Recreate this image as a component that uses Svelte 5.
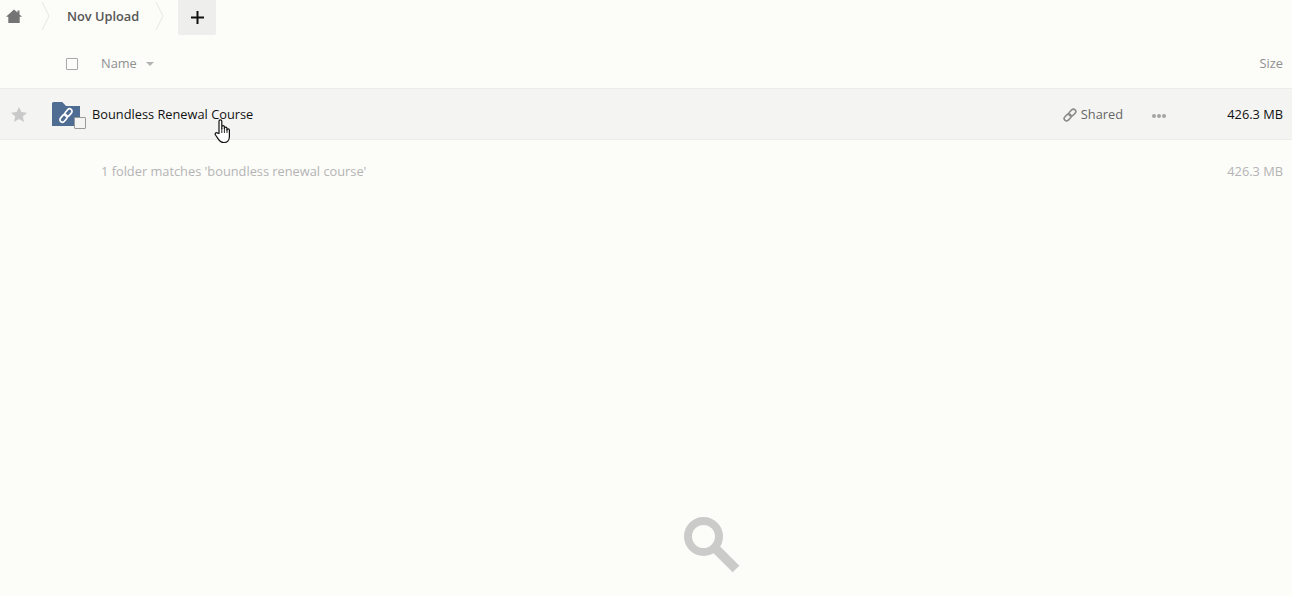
<script>
  const crumbs = ['Nov Upload'];
</script>

<div class="page">
  <nav class="crumbs">
    <div class="crumb home">
      <svg width="16" height="15" viewBox="0 0 16 15"><path fill="#747474" d="M8 .5 11.5 3.6V1.6h2v3.8L16 7.7h-2.3V14H2.3V7.7H0z"/></svg>
    </div>
    <svg class="sep first" width="10" height="30" viewBox="0 0 10 30"><path d="M1 1l7 14-7 14" fill="none" stroke="#e6e6e4" stroke-width="1"/></svg>
    {#each crumbs as c}
      <div class="crumb name">{c}</div>
    {/each}
    <svg class="sep" width="10" height="30" viewBox="0 0 10 30"><path d="M1 1l7 14-7 14" fill="none" stroke="#e6e6e4" stroke-width="1"/></svg>
    <button class="add" aria-label="New">
      <svg width="13" height="13" viewBox="0 0 13 13"><path d="M6.5 0v13M0 6.5h13" stroke="#111" stroke-width="2"/></svg>
    </button>
  </nav>

  <div class="head">
    <div class="lead"><span class="check"></span></div>
    <div class="namecol">Name <svg width="8" height="4" viewBox="0 0 8 4"><path d="M0 0h8L4 4z" fill="#b4b4b4"/></svg></div>
    <div class="sizecol">Size</div>
  </div>

  <div class="row">
    <svg class="star" width="16" height="15" viewBox="0 0 16 15"><path fill="#c9c9c9" d="M8 0l2.3 5.1 5.7.6-4.2 3.7 1.2 5.6L8 12.1 3 15l1.2-5.6L0 5.7l5.7-.6z"/></svg>
    <div class="folder">
      <svg width="28" height="24" viewBox="0 0 28 24"><path fill="#4f6c93" d="M0 1.5A1.5 1.5 0 0 1 1.5 0h8.7L14 4h14v20H0z"/><g fill="none" stroke="#fff" stroke-width="1.7" stroke-linecap="round" transform="translate(14 13.5) rotate(-50)"><rect x="-8" y="-2.5" width="8.6" height="5" rx="2.5"/><rect x="-.6" y="-2.5" width="8.6" height="5" rx="2.5"/></g></svg>
      <span class="fcheck"></span>
    </div>
    <div class="title">Boundless Renewal Course</div>
    <div class="shared">
      <svg width="14" height="14" viewBox="-7 -7 14 14"><g fill="none" stroke="#8c8c8c" stroke-width="1.6" transform="rotate(-45)"><rect x="-7.2" y="-2.4" width="7.8" height="4.8" rx="2.4"/><rect x="-.6" y="-2.4" width="7.8" height="4.8" rx="2.4"/></g></svg>
      <span>Shared</span>
    </div>
    <svg class="more" width="14" height="4" viewBox="0 0 14 4"><g fill="#a3a3a3"><circle cx="2" cy="2" r="2"/><circle cx="7" cy="2" r="2"/><circle cx="12" cy="2" r="2"/></g></svg>
    <div class="size">426.3 MB</div>
    <svg class="cursor" width="18" height="25" viewBox="0 0 17 25"><path fill="#fff" stroke="#111" stroke-width="1.2" stroke-linejoin="round" d="M4.5 14.5V2.2a1.4 1.4 0 0 1 2.8 0V9.5V8a1.3 1.3 0 0 1 2.6 0v1.5a1.3 1.3 0 0 1 2.6 0V11a1.2 1.2 0 0 1 2.4 0v6.5c0 3.5-2 6-5 6H9c-2.5 0-3.5-1-5-3.2L1 16c-1-1.6.8-3 2-1.9z"/><path d="M7.3 9v5M9.9 9v5M12.5 10v4" stroke="#111" stroke-width=".9" fill="none"/></svg>
  </div>

  <div class="summary">
    <div class="namecol">1 folder matches 'boundless renewal course'</div>
    <div class="sizecol">426.3 MB</div>
  </div>

  <div class="empty">
    <svg width="56" height="56" viewBox="0 0 56 56"><circle cx="19.5" cy="19.5" r="15.5" fill="none" stroke="#cbcbc9" stroke-width="8"/><path d="M31 31 52 52" stroke="#cbcbc9" stroke-width="9.5"/></svg>
  </div>
</div>

<style>
  :global(body) { margin: 0; background: #fcfcf9; }
  .page {
    height: 596px;
    overflow: hidden;
    background: #fcfcf9;
    font-family: "Open Sans", sans-serif;
    font-size: 12.8px;
    color: #111;
  }
  .crumbs { display: flex; align-items: flex-start; height: 35px; }
  .crumb { display: flex; align-items: center; height: 33px; }
  .home { padding-left: 6px; width: 41px; box-sizing: border-box; }
  .sep { margin-top: 1px; flex: none; }
  .first { margin-right: 16px; margin-left: 0; }
  .name { font-weight: 600; color: #555; width: 88px; height: 31px; }
  .add {
    display: flex; align-items: center; justify-content: center;
    width: 38px; height: 35px; margin-left: 13px; padding: 0; border: 0;
    background: #eeeeec; border-radius: 0 0 2px 2px;
  }
  .head {
    display: flex; align-items: center; height: 54px; box-sizing: border-box;
    padding: 2px 9px 0 0; border-bottom: 1px solid #ececea;
    color: #8f8f8f;
  }
  .lead { width: 101px; display: flex; padding: 2px 0 0 66px; box-sizing: border-box; }
  .check, .fcheck {
    display: block; width: 10px; height: 10px; box-sizing: content-box;
    border: 1px solid #a8a8a8; background: #fcfcf9; border-radius: 1px;
  }
  .namecol { flex: 1; display: flex; align-items: center; gap: 8px; }
  .namecol svg { margin-top: 2px; margin-left: 1px; }
  .row {
    position: relative; display: flex; align-items: center; height: 51px; box-sizing: border-box;
    background: #f4f5f2; border-bottom: 1px solid #ececea; padding: 0 9px 0 11px;
  }
  .star { margin-right: 25px; }
  .folder { position: relative; width: 28px; height: 24px; margin-right: 12px; }
  .folder > svg { display: block; }
  .fcheck { position: absolute; left: 22px; top: 15px; background: #f4f5f2; border-color: #999; }
  .title { flex: 1; color: #111; }
  .shared { display: flex; align-items: center; gap: 4px; color: #666; margin-right: 29px; }
  .shared svg { margin-top: 2px; }
  .more { margin-right: 57px; margin-top: 3px; }
  .size { width: 60px; text-align: right; color: #111; }
  .cursor { position: absolute; left: 214px; top: 30px; }
  .summary {
    display: flex; align-items: center; padding: 20px 9px 0 101px; height: 41px; box-sizing: border-box;
    color: #b4b4b4;
  }
  .sizecol { text-align: right; }
  .empty { display: flex; justify-content: center; padding: 336px 0 0 132px; }
  .empty svg { display: block; }
</style>
